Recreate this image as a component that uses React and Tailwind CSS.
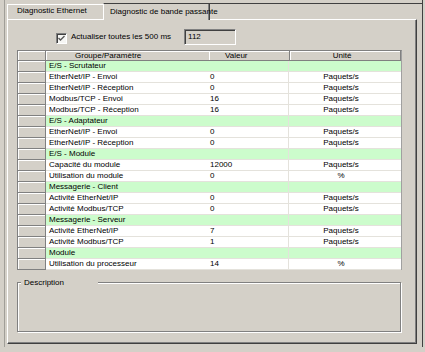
const rows = [
  { g: true, t: "E/S - Scrutateur" },
  { t: "EtherNet/IP - Envoi", v: "0", u: "Paquets/s" },
  { t: "EtherNet/IP - Réception", v: "0", u: "Paquets/s" },
  { t: "Modbus/TCP - Envoi", v: "16", u: "Paquets/s" },
  { t: "Modbus/TCP - Réception", v: "16", u: "Paquets/s" },
  { g: true, t: "E/S - Adaptateur" },
  { t: "EtherNet/IP - Envoi", v: "0", u: "Paquets/s" },
  { t: "EtherNet/IP - Réception", v: "0", u: "Paquets/s" },
  { g: true, t: "E/S - Module" },
  { t: "Capacité du module", v: "12000", u: "Paquets/s" },
  { t: "Utilisation du module", v: "0", u: "%" },
  { g: true, t: "Messagerie - Client" },
  { t: "Activité EtherNet/IP", v: "0", u: "Paquets/s" },
  { t: "Activité Modbus/TCP", v: "0", u: "Paquets/s" },
  { g: true, t: "Messagerie - Serveur" },
  { t: "Activité EtherNet/IP", v: "7", u: "Paquets/s" },
  { t: "Activité Modbus/TCP", v: "1", u: "Paquets/s" },
  { g: true, t: "Module" },
  { t: "Utilisation du processeur", v: "14", u: "%" },
];

export default function App() {
  return (
    <div className="w-[425px] h-[352px] bg-[#d4d0c8] overflow-hidden text-[8px] leading-none text-black font-['Liberation_Sans',Arial,sans-serif]">
      <div className="ml-[4px] w-[419px] h-[347px] border-l border-l-[#a09e98] border-r border-r-[#404040] flex flex-col">
        {/* Tabs */}
        <div className="h-[19px] shrink-0 flex items-end pl-[2px]">
          <div className="w-[96px] h-[15px] border-l border-t border-white border-r-0 pl-[9px] pt-[2px] whitespace-nowrap">
            Diagnostic Ethernet
          </div>
          <div className="relative z-10 -mb-px w-[107px] h-[17px] bg-[#d4d0c8] border-l border-l-white border-t border-t-[#404040] border-r border-r-[#404040] shadow-[inset_-1px_0_0_#808080] pl-[6px] pt-[4px] whitespace-nowrap">
            Diagnostic de bande passante
          </div>
          <div className="flex-1 self-stretch mt-[3px] border-t border-t-[#404040]" />
        </div>
        {/* Panel */}
        <div className="ml-[2px] w-[410px] h-[325px] shrink-0 border-t border-l border-t-white border-l-white border-r border-b border-r-[#404040] border-b-[#404040] shadow-[inset_-1px_-1px_0_#808080] flex flex-col">
          {/* refresh row */}
          <div className="mt-[9px] h-[16px] flex items-center pl-[48px]">
            <div className="w-[11px] h-[11px] mt-[3px] bg-[#f6f6f4] border-t border-l border-t-[#808080] border-l-[#808080] border-b border-r border-b-white border-r-white shadow-[inset_1px_1px_0_#404040] flex items-center justify-center">
              <svg width="7" height="7" viewBox="0 0 7 7">
                <path d="M0.5 3 L2.5 5 L6.5 1" fill="none" stroke="#5a5a5a" strokeWidth="1.4" />
              </svg>
            </div>
            <span className="ml-[4px] whitespace-nowrap">Actualiser toutes les 500 ms</span>
            <div className="ml-[13px] w-[52px] h-[16px] border-t border-l border-t-[#808080] border-l-[#808080] border-b border-r border-b-white border-r-white shadow-[inset_1px_1px_0_#404040] flex items-center pl-[3px]">
              112
            </div>
          </div>
          {/* table */}
          <div className="mt-[5px] ml-[9px] w-[385px] border-t border-l border-r border-t-[#808080] border-l-[#808080] border-r-[#a0a0a0] flex flex-col">
            <div className="h-[10px] flex bg-[#d4d0c8]">
              <div className="w-[28px] h-full border-r border-b border-[#808080] shadow-[inset_1px_1px_0_#fff]" />
              <div className="w-[163px] h-full border-b border-[#808080] shadow-[inset_1px_1px_0_#fff] flex items-center pl-[29px]">
                Groupe/Paramètre
              </div>
              <div className="w-[81px] h-full border-r border-b border-[#808080] shadow-[inset_1px_1px_0_#fff] flex items-center pl-[16px]">
                Valeur
              </div>
              <div className="w-[111px] h-full border-r border-b border-[#808080] shadow-[inset_1px_1px_0_#fff] flex items-center justify-center pr-[6px]">
                Unité
              </div>
            </div>
            {rows.map((r, i) => (
              <div key={i} className="h-[11px] flex">
                <div className="w-[28px] h-full bg-[#d4d0c8] border-r border-b border-[#808080] shadow-[inset_1px_1px_0_#fff]" />
                <div
                  className={
                    "flex-1 h-full flex border-b border-b-[#e4e2dc] " +
                    (r.g ? "bg-[#ccfccc]" : "bg-white")
                  }
                >
                  <div className="w-[162px] h-full flex items-center pl-[3px] whitespace-nowrap">{r.t}</div>
                  <div className="w-[81px] h-full flex items-center pl-[2px] border-r border-r-[#e4e2dc]">{r.v || ""}</div>
                  <div className="flex-1 h-full flex items-center justify-center pr-[8px]">{r.u || ""}</div>
                </div>
              </div>
            ))}
          </div>
          {/* description */}
          <div className="relative mt-[12px] ml-[9px] w-[384px] h-[50px] border border-[#808080] shadow-[inset_1px_1px_0_#fff,1px_1px_0_#fff]">
            <div className="absolute -top-[5px] left-[3px] w-[77px] h-[9px] bg-[#d4d0c8] pl-[3px] flex items-center">
              Description
            </div>
          </div>
        </div>
      </div>
    </div>
  );
}
